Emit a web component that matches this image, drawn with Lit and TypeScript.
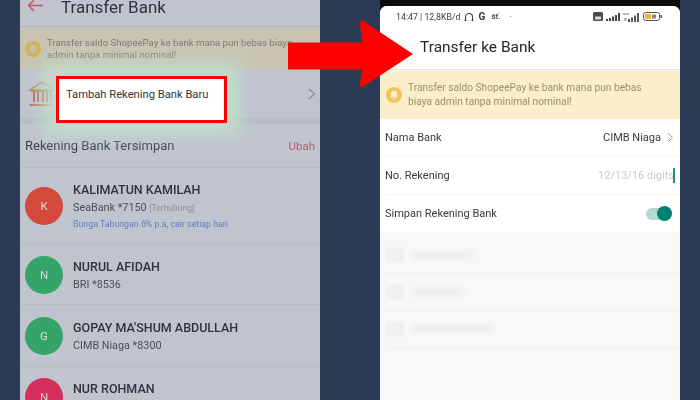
import { LitElement, html, css, svg } from "lit";
import { customElement } from "lit/decorators.js";

const contacts = [
  { i: "K", c: "#d34a3c", name: "KALIMATUN KAMILAH", sub: "SeaBank *7150", tag: "[Terhubung]", promo: "Bunga Tabungan 6% p.a, cair setiap hari", h: 77 },
  { i: "N", c: "#35a468", name: "NURUL AFIDAH", sub: "BRI *8536", h: 60 },
  { i: "G", c: "#35a468", name: "GOPAY MA'SHUM ABDULLAH", sub: "CIMB Niaga *8300", h: 62 },
  { i: "N", c: "#d42f5c", name: "NUR ROHMAN", sub: "", h: 60 },
];

const bell = (c: string, d: string) => svg`<svg viewBox="0 0 16 16" width="16" height="16"><circle cx="8" cy="8" r="8" fill="${c}"/><path d="M8 3.4c-2 0-3 1.5-3 3.3v2.4L4 10.6h8l-1-1.5V6.700c0-1.800-1-3.300-3-3.300z" fill="${d}"/><path d="M6.700 11.600h2.600L8 13z" fill="${d}"/></svg>`;

@customElement("app-root")
export class AppRoot extends LitElement {
  static styles = css`
    :host { display: block; width: 700px; height: 400px; overflow: hidden; font-family: Roboto, "Liberation Sans", sans-serif; }
    .stage { position: relative; width: 700px; height: 400px; background: #2d3a55; display: flex; gap: 60px; padding: 0 20px; box-sizing: border-box; overflow: hidden; }
    .left, .right { width: 300px; height: 400px; flex: none; overflow: hidden; display: flex; flex-direction: column; }
    .left { background: #c0c4cf; color: #30343f; }
    .lhead { height: 27px; flex: none; display: flex; align-items: flex-end; gap: 17px; padding-left: 7px; box-sizing: border-box; border-bottom: 1px solid #afb3bf; overflow: hidden; }
    .lhead svg { margin-bottom: 14px; flex: none; filter: blur(.4px); }
    .lhead span { font-size: 17px; line-height: 20px; margin-bottom: 9px; color: #2f3440; filter: blur(.4px); }
    .lban { margin-top: 1px; height: 41px; flex: none; background: #c9c4b2; display: flex; align-items: center; gap: 6px; padding-left: 5px; box-sizing: border-box; }
    .lban svg { flex: none; filter: blur(.4px); }
    .lban div { font-size: 9.600px; line-height: 11.500px; color: #7d7b72; filter: blur(.3px); white-space: nowrap; }
    .lbank { height: 49px; flex: none; display: flex; align-items: center; justify-content: space-between; padding: 0 4px 0 8px; box-sizing: border-box; }
    .lbank svg { filter: blur(.3px); }
    .gap { height: 6px; flex: none; background: #b9bdc8; }
    .saved { height: 44px; flex: none; display: flex; align-items: center; justify-content: space-between; padding: 0 5px; font-size: 13px; color: #3d414c; box-sizing: border-box; border-bottom: 1px solid #b8bcc7; filter: blur(.3px); }
    .saved b { font-weight: 400; color: #b4626a; font-size: 11.500px; }
    .contact { flex: none; display: flex; align-items: center; gap: 10px; padding-left: 5px; box-sizing: border-box; border-bottom: 1px solid #b8bcc7; }
    .av { width: 38px; height: 38px; border-radius: 50%; flex: none; display: flex; align-items: center; justify-content: center; color: #d5dfd9; font-size: 11.500px; filter: blur(.3px); }
    .ctext { display: flex; flex-direction: column; gap: 4px; filter: blur(.3px); white-space: nowrap; }
    .name { font-size: 12.500px; line-height: 15px; font-weight: 500; color: #2f333e; }
    .sub { font-size: 10.800px; line-height: 13px; color: #4b4f5a; }
    .tag { font-size: 8.500px; color: #8b8f9a; }
    .promo { font-size: 8.800px; line-height: 11px; color: #5f80bd; }

    .bezel { height: 6px; flex: none; background: #0c0c0c; }
    .right { background: #0c0c0c; }
    .phone { flex: 1; min-height: 0; background: #f8f8f9; border-radius: 7px 7px 0 0; display: flex; flex-direction: column; overflow: hidden; }
    .status { height: 21px; flex: none; background: #fff; display: flex; justify-content: space-between; align-items: center; padding: 0 18px 0 16px; color: #3c3c3c; font-size: 8.800px; filter: blur(.3px); }
    .status div { display: flex; align-items: center; gap: 3px; }
    .rhead { height: 43px; flex: none; background: #fff; display: flex; align-items: center; padding: 0 0 3px 40px; box-sizing: border-box; border-bottom: 1px solid #e6e6e6; font-size: 15.500px; color: #26262c; filter: blur(.2px); }
    .rban { height: 48px; flex: none; background: #fbeec8; display: flex; align-items: center; gap: 6px; padding: 0 6px; box-sizing: border-box; margin-top: 1px; }
    .rban svg { flex: none; filter: blur(.3px); }
    .rban div { font-size: 10.200px; line-height: 14px; color: #9a8f70; white-space: nowrap; filter: blur(.3px); }
    .form { background: #fff; flex: none; height: 113px; display: flex; flex-direction: column; padding: 0 0 0 5px; }
    .frow { flex: 1; display: flex; align-items: center; justify-content: space-between; font-size: 11px; color: #3a3a3e; padding-right: 6px; border-bottom: 1px solid #f6f6f6; filter: blur(.2px); }
    .frow:last-child { border-bottom: 0; }
    .val { display: flex; align-items: center; gap: 6px; }
    .ph { color: #c9c9cc; display: flex; align-items: center; gap: 0; margin-right: -1px; }
    .cursor { width: 2px; height: 15px; background: #1f8f80; margin-left: -1px; }
    .switch { width: 26px; height: 12px; border-radius: 6px; background: #b4d8d1; display: flex; justify-content: flex-end; align-items: center; margin-right: 2px; }
    .knob { width: 15px; height: 15px; border-radius: 50%; background: #00806e; flex: none; }
    .ghosts { display: flex; flex-direction: column; padding: 5px 0 0 6px; }
    .ghost { height: 37px; display: flex; align-items: center; gap: 8px; border-bottom: 1px solid #f0f0f1; box-sizing: border-box; }
    .gicon { width: 18px; height: 14px; background: #f0f0f1; flex: none; filter: blur(1.500px); }
    .gbar { height: 8px; background: #eeeeef; filter: blur(2px); }

    .glow { position: absolute; left: 56px; top: 76px; width: 171px; height: 47px; box-sizing: border-box; background: #fff; border: 3px solid #f00; box-shadow: 0 0 16px 13px #bfdccb; padding: 9px 7px; font-size: 11.200px; line-height: 14px; color: #33343a; white-space: nowrap; }
    .arrow { position: absolute; left: 288px; top: 18px; }
  `;

  render() {
    return html`<div class="stage">
      <section class="left">
        <div class="lhead">
          <svg width="17" height="13" viewBox="0 0 17 13"><path d="M16 6.500H1.500M7 1L1.500 6.500 7 12" fill="none" stroke="#c0585c" stroke-width="1.500"/></svg>
          <span>Transfer Bank</span>
        </div>
        <div class="lban">${bell("#d2b25c", "#c0c0b0")}<div>Transfer saldo ShopeePay ke bank mana pun bebas biaya<br />admin tanpa minimal nominal!</div></div>
        <div class="lbank">
          <svg width="28" height="26" viewBox="0 0 28 26" fill="none" stroke="#b0705c" stroke-width="1.400"><path d="M14 1L2 9h24zM3 10.500h22" stroke="#b88a5a"/><path d="M6 11v10M10 11v10M15 11v10M19 11v10M23 11v10" stroke="#c05a55" stroke-width="1.800"/><path d="M1.500 24h25" stroke="#c07a55" stroke-width="2"/></svg>
          <svg width="8" height="12" viewBox="0 0 8 12"><path d="M1 1l5.500 5L1 11" fill="none" stroke="#8b8f9b" stroke-width="1.200"/></svg>
        </div>
        <div class="gap"></div>
        <div class="saved"><span>Rekening Bank Tersimpan</span><b>Ubah</b></div>
        ${contacts.map(
          (c) => html`<div class="contact" style="height:${c.h}px">
            <div class="av" style="background:${c.c}">${c.i}</div>
            <div class="ctext">
              <div class="name">${c.name}</div>
              ${c.sub ? html`<div class="sub">${c.sub} ${c.tag ? html`<span class="tag">${c.tag}</span>` : ""}</div>` : html`<div class="sub">&nbsp;</div>`}
              ${c.promo ? html`<div class="promo">${c.promo}</div>` : ""}
            </div>
          </div>`
        )}
      </section>
      <section class="right">
        <div class="bezel"></div>
        <div class="phone">
          <div class="status">
            <div>
              <span>14:47 | 12,8KB/d</span>
              <svg width="10" height="10" viewBox="0 0 10 10"><path d="M1.500 8V5a3.500 3.500 0 0 1 7 0v3M0.500 8.500h2M7.500 8.500h2" fill="none" stroke="#3c3c3c" stroke-width="1.100"/></svg>
              <b style="font-size:10px;margin-left:2px">G</b>
              <span style="margin-left:3px;font-size:8px;font-weight:500">šť.</span>
              <span style="margin-left:6px">·</span>
            </div>
            <div>
              <svg width="10" height="9" viewBox="0 0 10 9"><rect width="10" height="9" rx="1.500" fill="#4a4a4a"/><rect x="2" y="4.500" width="6" height="3" fill="#ddd"/></svg>
              <svg width="14" height="8" viewBox="0 0 14 8" fill="#444"><rect x="0" y="6" width="2" height="2"/><rect x="3" y="5" width="2" height="3"/><rect x="6" y="3.500" width="2" height="4.500"/><rect x="9" y="2" width="2" height="6"/><rect x="12" y="0" width="2" height="8"/></svg>
              <svg width="17" height="10" viewBox="0 0 17 10" fill="#555"><rect x="0" y="1" width="6" height="2" fill="#bbb"/><rect x="1" y="6" width="3" height="3" fill="#bbb"/><rect x="5" y="7" width="2" height="3"/><rect x="8" y="5.500" width="2" height="4.500"/><rect x="11" y="3.500" width="2" height="6.500"/><rect x="14" y="1" width="2" height="9"/></svg>
              <svg width="19" height="9" viewBox="0 0 19 9"><rect x=".5" y=".5" width="16" height="8" rx="2" fill="#fff" stroke="#555"/><rect x="2" y="2" width="6" height="5" fill="#f0b43a"/><rect x="17.500" y="3" width="1.500" height="3" fill="#555"/><rect x="9" y="2.500" width="4" height="4" fill="#888"/></svg>
            </div>
          </div>
          <div class="rhead">Transfer ke Bank</div>
          <div class="rban">${bell("#f2c55c", "#fbeec8")}<div>Transfer saldo ShopeePay ke bank mana pun bebas<br />biaya admin tanpa minimal nominal!</div></div>
          <div class="form">
            <div class="frow"><span>Nama Bank</span><span class="val">CIMB Niaga <svg width="7" height="11" viewBox="0 0 7 11"><path d="M1 1l4.500 4.500L1 10" fill="none" stroke="#9b9b9b" stroke-width="1"/></svg></span></div>
            <div class="frow"><span>No. Rekening</span><span class="ph">12/13/16 digits<i class="cursor"></i></span></div>
            <div class="frow"><span>Simpan Rekening Bank</span><div class="switch"><div class="knob"></div></div></div>
          </div>
          <div class="ghosts">
            ${[60, 52, 82].map(
              (w) => html`<div class="ghost"><i class="gicon"></i><i class="gbar" style="width:${w}px"></i></div>`
            )}
          </div>
        </div>
      </section>
      <div class="glow">Tambah Rekening Bank Baru</div>
      <svg class="arrow" width="126" height="72" viewBox="0 0 126 72"><path d="M0 24.500H74L72 6Q71.500 1 76 3.500L125 36 76 68Q71.500 71 72 66L74 51.500H0z" fill="#f00"/></svg>
    </div>`;
  }
}
